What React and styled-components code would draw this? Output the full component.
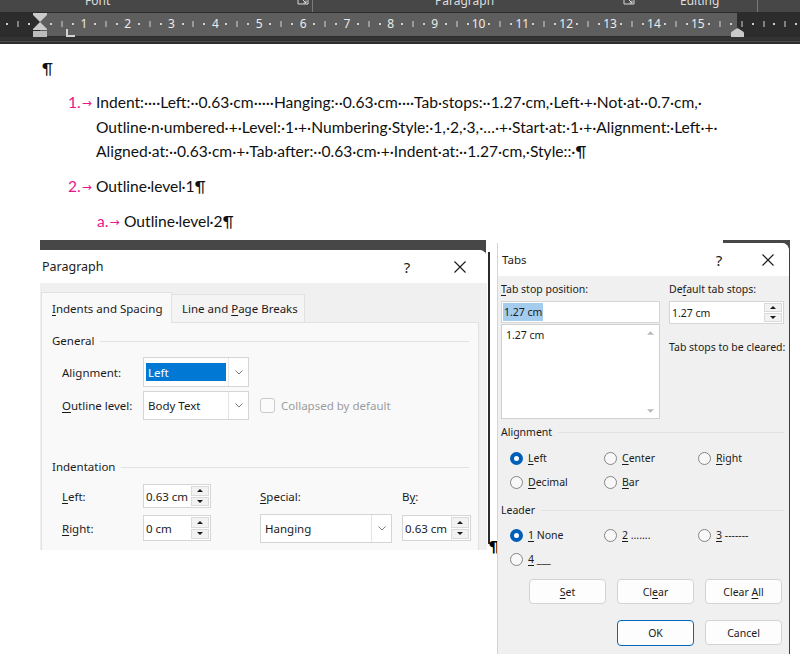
import React from 'react';
import styled, { createGlobalStyle, css } from 'styled-components';

const UI = `'Noto Sans', 'Segoe UI', sans-serif`;
const DOC = `Lato, 'Liberation Sans', sans-serif`;

const CM = 43.85;
const ORIGIN = 40;
const BAND_END = 737;

const GlobalStyle = createGlobalStyle`
  html, body {
    margin: 0;
    padding: 0;
    background: #fff;
  }
`;

const Screen = styled.div`
  position: relative;
  width: 800px;
  height: 654px;
  overflow: hidden;
  background: #fff;
`;

/* ---------- ribbon / ruler ---------- */

const GroupStrip = styled.div`
  height: 12px;
  display: flex;
  background: #474747;
  overflow: hidden;
`;

const GroupCell = styled.div`
  width: ${(p) => p.$w}px;
  flex: none;
  position: relative;
  display: flex;
  align-items: flex-end;
  padding-left: ${(p) => p.$pad}px;
  box-sizing: border-box;
  ${(p) =>
    p.$sep &&
    css`
      border-right: 1px solid #7a7a7a;
    `}
`;

/* the group captions sit mostly above the crop, only their lower half shows */
const GroupLabel = styled.span`
  font-family: ${UI};
  font-size: 12px;
  line-height: 14px;
  color: #dedede;
  margin-bottom: 4px;
  flex: 1;
`;

const Launcher = styled.svg`
  width: 12px;
  height: 5px;
  margin-right: ${(p) => p.$mr}px;
  margin-bottom: 7px;
`;

const RulerRow = styled.div`
  position: relative;
  height: 25px;
  background: #2c2c2c;
  padding-top: 1px;
  box-sizing: border-box;
`;

const RulerBand = styled.div`
  margin-left: ${ORIGIN}px;
  width: ${BAND_END - ORIGIN}px;
  height: 23px;
  background: #5e5e5e;
`;

const RulerFoot = styled.div`
  height: 7px;
  background: #2f2f2f;
  border-top: 3px solid #333;
  box-sizing: border-box;
  position: relative;
  &::after {
    content: '';
    position: absolute;
    left: 0;
    right: 0;
    top: 1px;
    height: 1px;
    background: #4d4d4d;
  }
`;

const Mark = styled.span`
  position: absolute;
  top: 12px;
  transform: translate(-50%, -50%);
  ${(p) =>
    p.$kind === 'dot' &&
    css`
      width: 2px;
      height: 2px;
      background: #cfcfcf;
    `}
  ${(p) =>
    p.$kind === 'line' &&
    css`
      width: 1px;
      height: 6px;
      background: #d4d4d4;
    `}
  ${(p) =>
    p.$kind === 'num' &&
    css`
      font-family: ${UI};
      font-size: 12px;
      line-height: 14px;
      color: #ececec;
    `}
`;

const RulerGlyph = styled.svg`
  position: absolute;
  left: ${(p) => p.$x}px;
  top: ${(p) => p.$y}px;
`;

/* ---------- document ---------- */

const DocPage = styled.main`
  padding: 12px 0 0 42px;
  font-family: ${DOC};
  font-size: 15.6px;
  color: #111;
`;

const Pilcrow = styled.div`
  line-height: 24px;
`;

const ListItem = styled.div`
  display: flex;
  margin-top: 10px;
  padding-left: ${(p) => p.$indent}px;
  line-height: 24.5px;
`;

const Marker = styled.span`
  width: ${(p) => p.$w}px;
  flex: none;
  color: #e8188a;
  white-space: nowrap;
`;

const Arrow = styled.span`
  font-family: 'DejaVu Sans', sans-serif;
  font-size: 12px;
  margin-left: 1px;
  vertical-align: 1px;
`;

const ItemText = styled.div`
  white-space: pre;
`;

const CursorBar = styled.div`
  position: absolute;
  left: 488px;
  top: 252px;
  width: 1.5px;
  height: 292px;
  background: #2a2a2a;
`;

const StrayPilcrow = styled.span`
  position: absolute;
  left: 489px;
  top: 537px;
  font-family: ${DOC};
  font-size: 15px;
  font-weight: 700;
  color: #000;
`;

/* ---------- dialogs ---------- */

const Backdrop = styled.div`
  position: absolute;
  left: ${(p) => p.$left}px;
  top: ${(p) => p.$top}px;
  width: ${(p) => p.$width}px;
  height: 16px;
  background: #474747;
`;

const Window = styled.section`
  position: absolute;
  left: ${(p) => p.$left}px;
  top: ${(p) => p.$top}px;
  width: ${(p) => p.$width}px;
  height: ${(p) => p.$height}px;
  box-sizing: border-box;
  display: flex;
  flex-direction: column;
  background: #f0f0f0;
  border-top-right-radius: 8px;
  overflow: hidden;
  font-family: ${UI};
  font-size: ${(p) => p.$fs}px;
  color: #1b1b1b;
  ${(p) =>
    p.$framed &&
    css`
      border-left: 1px solid #d4d4d4;
      border-right: 1px solid #3d3d3d;
    `}
`;

const TitleBar = styled.header`
  height: 33px;
  flex: none;
  display: flex;
  align-items: center;
  background: #fff;
  padding: 0 ${(p) => p.$padR}px 0 ${(p) => p.$padL}px;
`;

const TitleText = styled.span`
  flex: 1;
  font-size: ${(p) => p.$fs}px;
`;

const TitleButton = styled.span`
  width: 40px;
  height: 33px;
  display: flex;
  align-items: center;
  justify-content: center;
  font-size: 15px;
  color: #1a1a1a;
  margin-left: ${(p) => p.$ml || 0}px;
`;

const Key = styled.u`
  text-decoration: underline;
  text-decoration-thickness: 1px;
  text-underline-offset: 2px;
`;

/* paragraph dialog */

const ParaBody = styled.div`
  flex: 1;
  display: flex;
  flex-direction: column;
  padding: 9px 8px 0 1px;
`;

const TabStrip = styled.div`
  display: flex;
  align-items: flex-end;
  height: 30px;
  flex: none;
`;

const TabItem = styled.div`
  width: ${(p) => p.$w}px;
  box-sizing: border-box;
  height: ${(p) => (p.$active ? 31 : 28)}px;
  margin-bottom: ${(p) => (p.$active ? -1 : 0)}px;
  padding-left: 10px;
  display: flex;
  align-items: center;
  border: 1px solid #e1e1e1;
  border-bottom: none;
  background: ${(p) => (p.$active ? '#f9f9f9' : '#f4f4f4')};
  position: relative;
  z-index: ${(p) => (p.$active ? 1 : 0)};
  ${(p) =>
    !p.$active &&
    css`
      border-left: none;
    `}
`;

const TabPanel = styled.div`
  flex: 1;
  background: #f9f9f9;
  border: 1px solid #e1e1e1;
  border-bottom: none;
  padding: 10px 9px 0 10px;
`;

const SectionHead = styled.div`
  display: flex;
  align-items: center;
  gap: 6px;
  line-height: 16px;
  margin-top: ${(p) => p.$mt || 0}px;
  &::after {
    content: '';
    flex: 1;
    height: 1px;
    background: #e2e2e2;
  }
`;

const FieldRow = styled.div`
  display: flex;
  align-items: center;
  height: ${(p) => p.$h}px;
  margin-top: ${(p) => p.$mt}px;
  padding-left: 10px;
`;

const FieldLabel = styled.span`
  width: 81px;
  flex: none;
`;

const IndentGrid = styled.div`
  display: grid;
  grid-template-columns: 81px 117px 142px 69px;
  grid-auto-rows: 26px;
  row-gap: 6px;
  align-items: center;
  margin-top: 8px;
  padding-left: 10px;
`;

const Select = styled.div`
  width: ${(p) => p.$w}px;
  height: ${(p) => p.$h}px;
  box-sizing: border-box;
  display: flex;
  background: #fff;
  border: 1px solid #d5d5d5;
`;

const SelectValue = styled.div`
  flex: 1;
  display: flex;
  align-items: center;
  padding: 5px 2px;
  ${(p) =>
    p.$highlight
      ? css`
          & > span {
            flex: 1;
            align-self: stretch;
            display: flex;
            align-items: center;
            padding-left: 2px;
            background: #0078d4;
            color: #fff;
          }
        `
      : css`
          padding-left: 4px;
        `}
`;

const SelectArrow = styled.div`
  width: 19px;
  flex: none;
  border-left: 1px solid #e4e4e4;
  display: flex;
  align-items: center;
  justify-content: center;
`;

const Spin = styled.div`
  width: ${(p) => p.$w}px;
  height: ${(p) => p.$h}px;
  margin-top: ${(p) => p.$mt || 0}px;
  box-sizing: border-box;
  display: flex;
  background: #fff;
  border: 1px solid #d5d5d5;
`;

const SpinValue = styled.div`
  flex: 1;
  display: flex;
  align-items: center;
  padding-left: 2px;
`;

const SpinButtons = styled.div`
  width: 18px;
  flex: none;
  display: flex;
  flex-direction: column;
  padding: 1px;
  gap: 1px;
`;

const SpinButton = styled.div`
  flex: 1;
  background: #f2f2f2;
  border: 1px solid #dadada;
  display: flex;
  align-items: center;
  justify-content: center;
`;

const CheckRow = styled.div`
  display: flex;
  align-items: center;
  gap: 6px;
  margin-left: 11px;
  color: #9c9c9c;
`;

const CheckBox = styled.span`
  width: 15px;
  height: 15px;
  box-sizing: border-box;
  border: 1px solid #cacaca;
  border-radius: 3px;
  background: #fbfbfb;
`;

/* tabs dialog */

const TabsBody = styled.div`
  flex: 1;
  padding: 5px 5px 0 3px;
`;

const TopGrid = styled.div`
  display: grid;
  grid-template-columns: 159px 115px;
  column-gap: 9px;
`;

const Column = styled.div`
  display: flex;
  flex-direction: column;
`;

const FieldCaption = styled.div`
  line-height: 16px;
  white-space: nowrap;
  margin-top: ${(p) => p.$mt || 0}px;
`;

const TextBox = styled.div`
  height: 22px;
  margin-top: 4px;
  box-sizing: border-box;
  background: #fff;
  border: 1px solid #d5d5d5;
  display: flex;
  align-items: center;
  padding-left: 1px;
`;

const Selected = styled.span`
  background: #a3ccef;
  padding: 2px 1px;
`;

const ListBox = styled.div`
  height: 95px;
  margin-top: 1px;
  box-sizing: border-box;
  background: #fff;
  border: 1px solid #cfcfcf;
  display: flex;
`;

const ListItems = styled.div`
  flex: 1;
  padding: 3px 0 0 4px;
`;

const ScrollRail = styled.div`
  width: 18px;
  display: flex;
  flex-direction: column;
  justify-content: space-between;
  align-items: center;
  padding: 6px 0 5px;
`;

const RadioGrid = styled.div`
  display: grid;
  grid-template-columns: repeat(3, 94px);
  grid-auto-rows: 24px;
  align-items: center;
  margin-top: ${(p) => p.$mt}px;
  padding-left: 9px;
`;

const RadioItem = styled.label`
  display: flex;
  align-items: center;
  gap: 5px;
  white-space: nowrap;
`;

const RadioDot = styled.span`
  width: 13px;
  height: 13px;
  box-sizing: border-box;
  border-radius: 50%;
  background: #fff;
  ${(p) =>
    p.$checked
      ? css`
          border: 4px solid #005fb8;
        `
      : css`
          border: 1px solid #858585;
          background: #f8f8f8;
        `}
`;

const ButtonRow = styled.div`
  display: flex;
  justify-content: flex-end;
  gap: 11px;
  padding-right: 2px;
  margin-top: ${(p) => p.$mt}px;
`;

const Button = styled.div`
  width: 77px;
  height: 25px;
  box-sizing: border-box;
  display: flex;
  align-items: center;
  justify-content: center;
  background: #fdfdfd;
  border: 1px solid #d3d3d3;
  border-radius: 4px;
  ${(p) =>
    p.$default &&
    css`
      height: 26px;
      border-color: #0067c0;
    `}
`;

/* ---------- small drawings ---------- */

const Chevron = () => (
  <svg width="8" height="5" viewBox="0 0 8 5">
    <path d="M0.5 0.5 L4 4 L7.5 0.5" fill="none" stroke="#7a7a7a" strokeWidth="1" />
  </svg>
);

const Tri = ({ down, color = '#1b1b1b', w = 6, h = 3 }) => (
  <svg width={w} height={h} viewBox="0 0 6 3">
    <polygon points={down ? '0,0 6,0 3,3' : '0,3 6,3 3,0'} fill={color} />
  </svg>
);

const CloseGlyph = () => (
  <svg width="12" height="12" viewBox="0 0 12 12">
    <path d="M0.5 0.5 L11.5 11.5 M11.5 0.5 L0.5 11.5" stroke="#1a1a1a" strokeWidth="1.1" />
  </svg>
);

const LauncherIcon = ({ mr }) => (
  <Launcher $mr={mr} viewBox="0 0 12 5">
    <path d="M1 0 V4 H11 V0 M6 0 L9 3 M6.5 3 H9 V0.5" fill="none" stroke="#d8d8d8" strokeWidth="1" />
  </Launcher>
);

const SpinBox = ({ value, w, h, mt }) => (
  <Spin $w={w} $h={h} $mt={mt}>
    <SpinValue>{value}</SpinValue>
    <SpinButtons>
      <SpinButton>
        <Tri />
      </SpinButton>
      <SpinButton>
        <Tri down />
      </SpinButton>
    </SpinButtons>
  </Spin>
);

const Radio = ({ checked, children }) => (
  <RadioItem>
    <RadioDot $checked={checked} />
    <span>{children}</span>
  </RadioItem>
);

const rulerMarks = () => {
  const marks = [];
  for (let i = -3; i <= 72; i++) {
    const x = ORIGIN + (i * CM) / 4;
    if (x > 800) break;
    if (i === 0) continue;
    const inBand = x > ORIGIN && x < BAND_END;
    if (i % 4 === 0) {
      marks.push(inBand ? { kind: 'num', x, label: i / 4 } : { kind: 'line', x });
    } else if (i % 2 === 0) {
      marks.push({ kind: 'line', x });
    } else {
      marks.push({ kind: 'dot', x });
    }
  }
  return marks;
};

const numberedLines = [
  'Indent:····Left:··0.63·cm·····Hanging:··0.63·cm····Tab·stops:··1.27·cm,·Left·+·Not·at··0.7·cm,·',
  'Outline·n·umbered·+·Level:·1·+·Numbering·Style:·1,·2,·3,·…·+·Start·at:·1·+·Alignment:·Left·+·',
  'Aligned·at:··0.63·cm·+·Tab·after:··0.63·cm·+·Indent·at:··1.27·cm,·Style::·¶',
];

const App = () => {
  const marks = rulerMarks();

  return (
    <Screen>
      <GlobalStyle />

      <GroupStrip>
        <GroupCell $w={313} $pad={85} $sep>
          <GroupLabel>Font</GroupLabel>
          <LauncherIcon mr={3} />
        </GroupCell>
        <GroupCell $w={330} $pad={122}>
          <GroupLabel>Paragraph</GroupLabel>
          <LauncherIcon mr={8} />
        </GroupCell>
        <GroupCell $w={115} $pad={37} $sep>
          <GroupLabel>Editing</GroupLabel>
        </GroupCell>
      </GroupStrip>

      <RulerRow>
        <RulerBand />
        {marks.map((m) => (
          <Mark key={m.x} $kind={m.kind} style={{ left: m.x }}>
            {m.kind === 'num' ? m.label : null}
          </Mark>
        ))}
        <RulerGlyph $x={33} $y={1} width="14" height="24" viewBox="0 0 14 24">
          <polygon points="0,0 14,0 14,2 7,9 0,2" fill="#cacaca" />
          <polygon points="7,9 14,16 14,17 0,17 0,16" fill="#cacaca" />
          <rect x="0" y="18" width="14" height="6" fill="#bdbdbd" />
        </RulerGlyph>
        <RulerGlyph $x={66} $y={17} width="9" height="8" viewBox="0 0 9 8">
          <path d="M1 0 V7 H9" fill="none" stroke="#d2d2d2" strokeWidth="2" />
        </RulerGlyph>
        <RulerGlyph $x={731} $y={16} width="13" height="9" viewBox="0 0 13 9">
          <path d="M0 9 V5 Q0 4 1 3.4 L5.6 0.4 Q6.5 0 7.4 0.4 L12 3.4 Q13 4 13 5 V9 Z" fill="#c9c9c9" />
        </RulerGlyph>
      </RulerRow>
      <RulerFoot />

      <DocPage>
        <Pilcrow>¶</Pilcrow>
        <ListItem $indent={26}>
          <Marker $w={28}>
            1.<Arrow>→</Arrow>
          </Marker>
          <ItemText>
            {numberedLines.map((line) => (
              <div key={line}>{line}</div>
            ))}
          </ItemText>
        </ListItem>
        <ListItem $indent={26}>
          <Marker $w={28}>
            2.<Arrow>→</Arrow>
          </Marker>
          <ItemText>Outline·level·1¶</ItemText>
        </ListItem>
        <ListItem $indent={55}>
          <Marker $w={27}>
            a.<Arrow>→</Arrow>
          </Marker>
          <ItemText>Outline·level·2¶</ItemText>
        </ListItem>
      </DocPage>

      <CursorBar />
      <StrayPilcrow>¶</StrayPilcrow>

      <Backdrop $left={40} $top={240} $width={446} />
      <Window $left={40} $top={250} $width={447} $height={300} $fs={11.5}>
        <TitleBar $padL={2} $padR={7}>
          <TitleText $fs={12.5}>Paragraph</TitleText>
          <TitleButton>?</TitleButton>
          <TitleButton $ml={13}>
            <CloseGlyph />
          </TitleButton>
        </TitleBar>
        <ParaBody>
          <TabStrip>
            <TabItem $active $w={131}>
              <span>
                <Key>I</Key>ndents and Spacing
              </span>
            </TabItem>
            <TabItem $w={133}>
              <span>
                Line and <Key>P</Key>age Breaks
              </span>
            </TabItem>
          </TabStrip>
          <TabPanel>
            <SectionHead>General</SectionHead>
            <FieldRow $h={30} $mt={8}>
              <FieldLabel>
                Ali<Key>g</Key>nment:
              </FieldLabel>
              <Select $w={106} $h={30}>
                <SelectValue $highlight>
                  <span>Left</span>
                </SelectValue>
                <SelectArrow>
                  <Chevron />
                </SelectArrow>
              </Select>
            </FieldRow>
            <FieldRow $h={29} $mt={4}>
              <FieldLabel>
                <Key>O</Key>utline level:
              </FieldLabel>
              <Select $w={106} $h={29}>
                <SelectValue>Body Text</SelectValue>
                <SelectArrow>
                  <Chevron />
                </SelectArrow>
              </Select>
              <CheckRow>
                <CheckBox />
                <span>Collapsed by default</span>
              </CheckRow>
            </FieldRow>
            <SectionHead $mt={39}>Indentation</SectionHead>
            <IndentGrid>
              <span>
                <Key>L</Key>eft:
              </span>
              <SpinBox value="0.63 cm" w={68} h={24} />
              <span>
                <Key>S</Key>pecial:
              </span>
              <span>
                B<Key>y</Key>:
              </span>
              <span>
                <Key>R</Key>ight:
              </span>
              <SpinBox value="0 cm" w={68} h={26} />
              <Select $w={132} $h={29}>
                <SelectValue>Hanging</SelectValue>
                <SelectArrow>
                  <Chevron />
                </SelectArrow>
              </Select>
              <SpinBox value="0.63 cm" w={69} h={26} />
            </IndentGrid>
          </TabPanel>
        </ParaBody>
      </Window>

      <Backdrop $left={723} $top={240} $width={67} />
      <Window $left={497} $top={243} $width={293} $height={420} $fs={10.5} $framed>
        <TitleBar $padL={4} $padR={1}>
          <TitleText $fs={11.5}>Tabs</TitleText>
          <TitleButton>?</TitleButton>
          <TitleButton $ml={9}>
            <CloseGlyph />
          </TitleButton>
        </TitleBar>
        <TabsBody>
          <TopGrid>
            <Column>
              <FieldCaption>
                <Key>T</Key>ab stop position:
              </FieldCaption>
              <TextBox>
                <Selected>1.27 cm</Selected>
              </TextBox>
              <ListBox>
                <ListItems>1.27 cm</ListItems>
                <ScrollRail>
                  <Tri color="#b8b8b8" w={7} h={4} />
                  <Tri down color="#b8b8b8" w={7} h={4} />
                </ScrollRail>
              </ListBox>
            </Column>
            <Column>
              <FieldCaption>
                De<Key>f</Key>ault tab stops:
              </FieldCaption>
              <SpinBox value="1.27 cm" w={115} h={23} mt={4} />
              <FieldCaption $mt={15}>Tab stops to be cleared:</FieldCaption>
            </Column>
          </TopGrid>

          <SectionHead $mt={5}>Alignment</SectionHead>
          <RadioGrid $mt={6}>
            <Radio checked>
              <Key>L</Key>eft
            </Radio>
            <Radio>
              <Key>C</Key>enter
            </Radio>
            <Radio>
              <Key>R</Key>ight
            </Radio>
            <Radio>
              <Key>D</Key>ecimal
            </Radio>
            <Radio>
              <Key>B</Key>ar
            </Radio>
          </RadioGrid>

          <SectionHead $mt={8}>Leader</SectionHead>
          <RadioGrid $mt={5}>
            <Radio checked>
              <Key>1</Key> None
            </Radio>
            <Radio>
              <Key>2</Key> .......
            </Radio>
            <Radio>
              <Key>3</Key> -------
            </Radio>
            <Radio>
              <Key>4</Key> ___
            </Radio>
          </RadioGrid>

          <ButtonRow $mt={8}>
            <Button>
              <span>
                <Key>S</Key>et
              </span>
            </Button>
            <Button>
              <span>
                Cl<Key>e</Key>ar
              </span>
            </Button>
            <Button>
              <span>
                Clear <Key>A</Key>ll
              </span>
            </Button>
          </ButtonRow>
          <ButtonRow $mt={16}>
            <Button $default>OK</Button>
            <Button>Cancel</Button>
          </ButtonRow>
        </TabsBody>
      </Window>
    </Screen>
  );
};

export default App;
